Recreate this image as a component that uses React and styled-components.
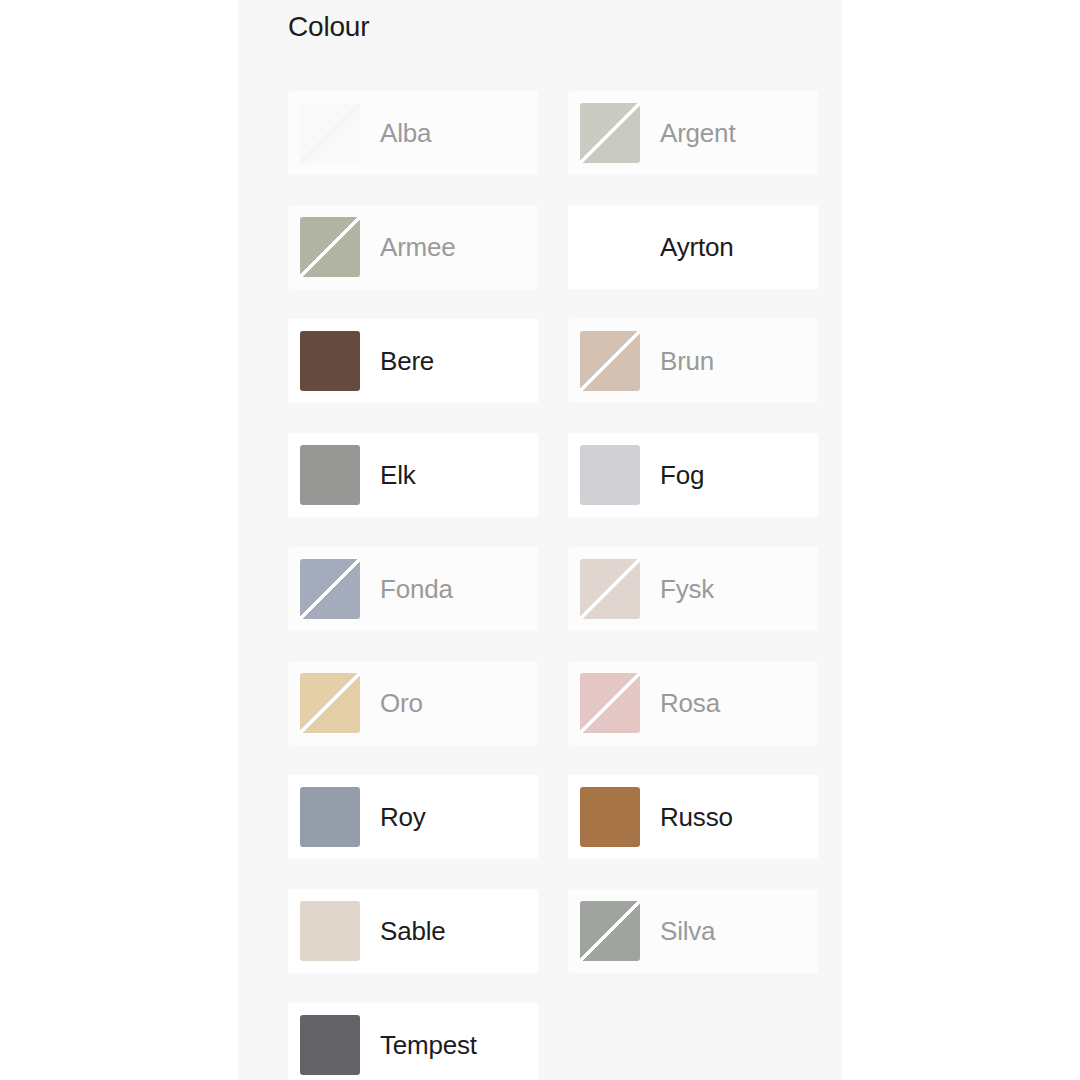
import styled, { createGlobalStyle, css } from 'styled-components';

const GlobalStyle = createGlobalStyle`
  body {
    margin: 0;
    background: #ffffff;
    font-family: "Liberation Sans", Arial, sans-serif;
  }
`;

const Panel = styled.div`
  width: 604px;
  min-height: 1080px;
  margin: 0 auto;
  padding: 8px 24px 0 50px;
  box-sizing: border-box;
  background: #f7f7f7;
`;

const Title = styled.h2`
  margin: 0;
  font-size: 28px;
  line-height: 38px;
  font-weight: 400;
  color: #1c1c1c;
  letter-spacing: -0.2px;
`;

const Grid = styled.ul`
  list-style: none;
  margin: 45px 0 0;
  padding: 0;
  display: grid;
  grid-template-columns: 250px 250px;
  column-gap: 30px;
  row-gap: 30px;
`;

const Option = styled.li`
  height: 84px;
  box-sizing: border-box;
  padding: 12px;
  display: flex;
  align-items: center;
  gap: 20px;
  border-radius: 3px;
  background: ${(p) => (p.$disabled ? '#fcfcfc' : '#ffffff')};
  cursor: ${(p) => (p.$disabled ? 'default' : 'pointer')};
`;

const Swatch = styled.span`
  flex-shrink: 0;
  width: 60px;
  height: 60px;
  border-radius: 3px;
  background: ${(p) => p.$color};
  ${(p) =>
    p.$disabled &&
    css`
      background: linear-gradient(
        to bottom right,
        ${p.$color} calc(50% - 1.5px),
        ${p.$line} calc(50% - 1.5px),
        ${p.$line} calc(50% + 1.5px),
        ${p.$color} calc(50% + 1.5px)
      );
    `}
`;

const Name = styled.span`
  font-size: 26px;
  line-height: 30px;
  color: ${(p) => (p.$disabled ? '#9a9a9a' : '#1c1c1c')};
  letter-spacing: -0.2px;
`;

const colours = [
  { name: 'Alba', color: '#f9f9f9', line: '#f4f4f4', disabled: true },
  { name: 'Argent', color: '#c9cac2', disabled: true },
  { name: 'Armee', color: '#b1b4a3', disabled: true },
  { name: 'Ayrton', color: '#ffffff' },
  { name: 'Bere', color: '#654b3f' },
  { name: 'Brun', color: '#d3c1b3', disabled: true },
  { name: 'Elk', color: '#979796' },
  { name: 'Fog', color: '#d0d0d5' },
  { name: 'Fonda', color: '#a4abba', disabled: true },
  { name: 'Fysk', color: '#e0d5cf', disabled: true },
  { name: 'Oro', color: '#e4cfa8', disabled: true },
  { name: 'Rosa', color: '#e4c7c5', disabled: true },
  { name: 'Roy', color: '#959dab' },
  { name: 'Russo', color: '#a77447' },
  { name: 'Sable', color: '#e0d6cc' },
  { name: 'Silva', color: '#9fa59e', disabled: true },
  { name: 'Tempest', color: '#636367' },
];

const App = () => {
  return (
    <>
      <GlobalStyle />
      <Panel>
        <Title>Colour</Title>
        <Grid>
          {colours.map((c) => (
            <Option key={c.name} $disabled={c.disabled}>
              <Swatch $color={c.color} $line={c.line || '#ffffff'} $disabled={c.disabled} />
              <Name $disabled={c.disabled}>{c.name}</Name>
            </Option>
          ))}
        </Grid>
      </Panel>
    </>
  );
};

export default App;
